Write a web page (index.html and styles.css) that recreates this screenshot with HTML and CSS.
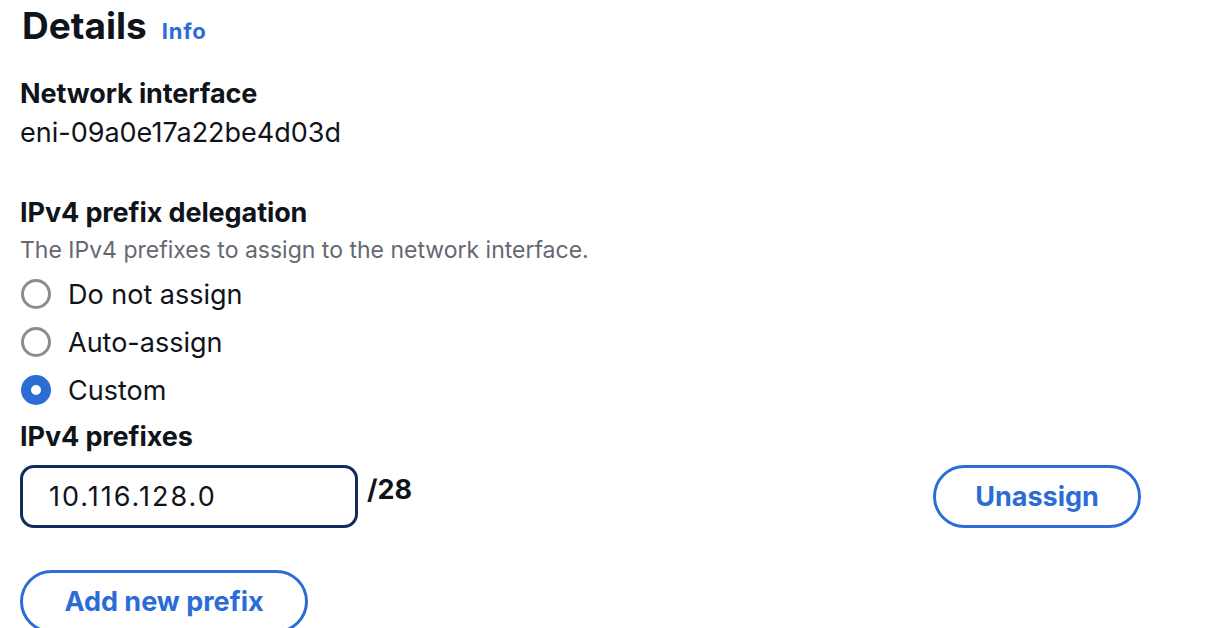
FILE: index.html
```html
<!DOCTYPE html>
<html>
<head>
<meta charset="utf-8">
<link rel="stylesheet" href="styles.css">
</head>
<body>
<div class="page">
  <div class="header">
    <h2 class="title">Details</h2>
    <a class="info" href="#">Info</a>
  </div>

  <div class="field network">
    <div class="label">Network interface</div>
    <div class="value">eni-09a0e17a22be4d03d</div>
  </div>

  <div class="field delegation">
    <div class="label">IPv4 prefix delegation</div>
    <div class="desc">The IPv4 prefixes to assign to the network interface.</div>
    <div class="radios">
      <label class="radio"><span class="circle"></span><span class="rlabel">Do not assign</span></label>
      <label class="radio"><span class="circle"></span><span class="rlabel">Auto-assign</span></label>
      <label class="radio"><span class="circle checked"></span><span class="rlabel">Custom</span></label>
    </div>
  </div>

  <div class="field prefixes">
    <div class="label">IPv4 prefixes</div>
    <div class="row">
      <div class="inputwrap">
        <div class="input">10.116.128.0</div>
        <span class="suffix">/28</span>
      </div>
      <button class="btn unassign">Unassign</button>
    </div>
    <button class="btn add">Add new prefix</button>
  </div>
</div>
</body>
</html>
```

FILE: styles.css
```css
* { box-sizing: border-box; }
html, body { margin: 0; padding: 0; background: #fff; }
body {
  font-family: "Inter", "Noto Sans", sans-serif;
  color: #0f141a;
}
.page {
  padding: 4px 0 0 20px;
  width: 1226px;
}
.header {
  display: flex;
  align-items: baseline;
  gap: 15px;
  padding-left: 2px;
}
.title {
  margin: 0;
  font-size: 37px;
  line-height: 44px;
  font-weight: 700;
}
.info {
  color: #2c6cd6;
  font-weight: 700;
  font-size: 22px;
  letter-spacing: 0.8px;
  text-decoration: none;
}
.label {
  font-size: 27px;
  font-weight: 700;
  line-height: 36px;
  letter-spacing: -0.1px;
}
.value {
  font-size: 27px;
  line-height: 42px;
}
.network { margin-top: 28px; }
.delegation { margin-top: 41px; }
.desc {
  color: #656871;
  font-size: 23px;
  line-height: 39px;
}
.radios { display: flex; flex-direction: column; }
.radio {
  display: flex;
  align-items: center;
  gap: 17px;
  height: 48px;
  font-size: 27px;
}
.circle {
  width: 30px;
  height: 30px;
  border-radius: 50%;
  border: 3.5px solid #8c8c94;
  flex: none;
  margin-left: 1px;
}
.circle.checked {
  border: 10px solid #2c6cd6;
  background: #fff;
}
.prefixes { margin-top: 5px; }
.row {
  display: flex;
  justify-content: space-between;
  align-items: flex-start;
  width: 1121px;
  margin-top: 10px;
}
.inputwrap { display: flex; align-items: flex-start; gap: 9px; }
.input {
  width: 338px;
  height: 63px;
  border: 3px solid #102b5c;
  border-radius: 14px;
  padding-left: 26px;
  font-size: 27px;
  letter-spacing: 2px;
  line-height: 57px;
}
.suffix {
  font-weight: 700;
  font-size: 27px;
  line-height: 33px;
  margin-top: 8px;
}
.btn {
  display: block;
  font-family: inherit;
  background: #fff;
  border: 3px solid #2c6cd6;
  color: #2c6cd6;
  border-radius: 40px;
  font-weight: 700;
  font-size: 27px;
  height: 63px;
  padding: 0;
  cursor: pointer;
}
.unassign { width: 208px; }
.add { width: 288px; margin-top: 42px; }
```
